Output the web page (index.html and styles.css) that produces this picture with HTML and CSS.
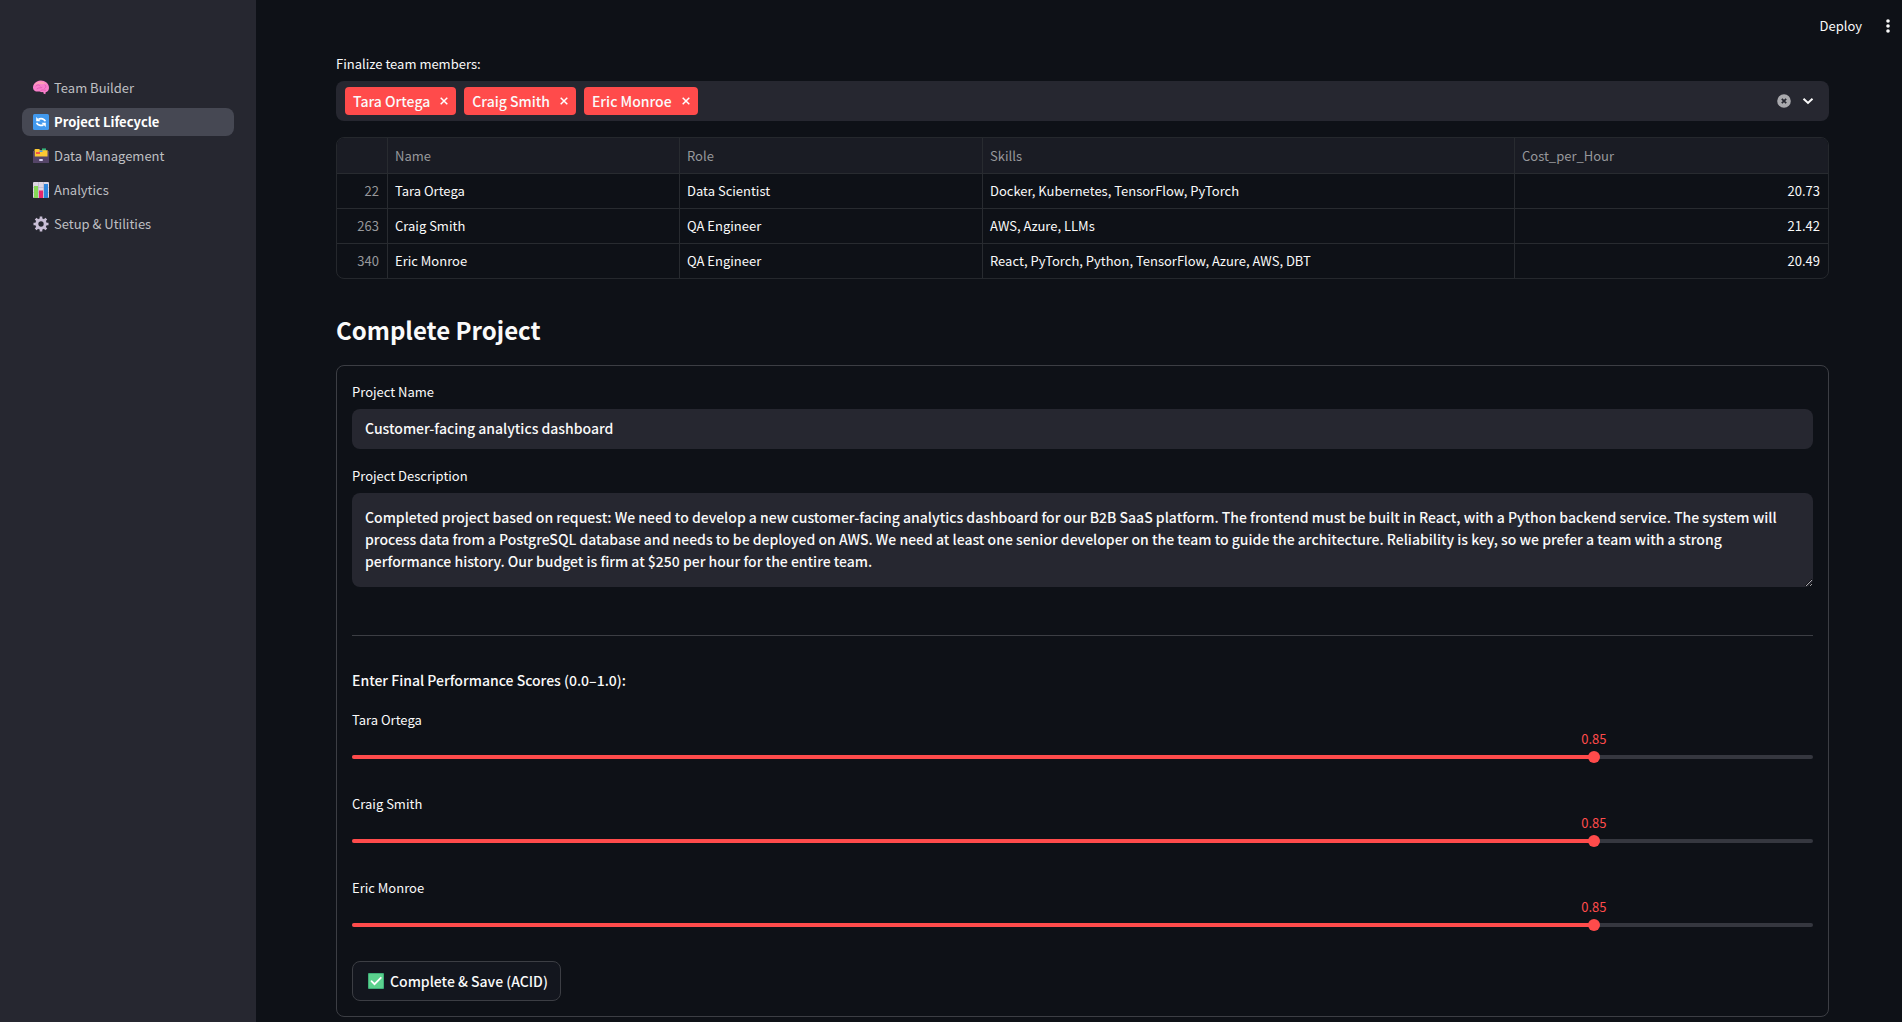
FILE: index.html
```html
<!DOCTYPE html>
<html lang="en">
<head>
<meta charset="utf-8">
<meta name="viewport" content="width=device-width, initial-scale=1">
<title>Project Lifecycle</title>
<link rel="stylesheet" href="styles.css">
</head>
<body>
<div class="app">
  <nav class="sidebar" aria-label="Pages">
    <a class="nav-link" href="#team">
      <svg class="emoji" viewBox="0 0 16 16" aria-hidden="true"><path d="M0 8C-.2 5 1.500 2.500 4 1.500C7-.2 11 .5 13.500 2.500C16 4.500 16.500 8 15.500 10C15 11.500 13.500 12 12.800 12L12.300 14.300L10.500 13.500L10.300 12C8 12.500 7 11.500 6 11.500C3 12 .5 11 0 8Z" fill="#f97fcb"/><path d="M1 6C2 3 4 2 6 1.800C9 1 12 2.500 13.500 4C11 3.500 9 4.500 7 4C5 3.500 3 4.500 1 6Z" fill="#fb9fb4"/><path d="M3 6C5 4 6.500 5 7 6M4 8.800C6 7 8 8.500 9 7.500M12 5C13.500 6 13 8 11.500 8.500M8 10.300C10 9.300 11 10.300 12.500 10.300" fill="none" stroke="#e055b0" stroke-width=".8" stroke-linecap="round"/></svg>
      <span>Team Builder</span>
    </a>
    <a class="nav-link active" href="#lifecycle" aria-current="page">
      <svg class="emoji" viewBox="0 0 16 16" aria-hidden="true"><rect width="16" height="16" rx="1.500" fill="#4199ee"/><path d="M12.300 7.300C11.500 4.800 8 3.800 5.500 5.300M3.700 8.700C4.500 11.200 8 12.200 10.500 10.700" fill="none" stroke="#fff" stroke-width="1.800"/><path d="M3.200 3V7.300H7.500ZM12.800 13V8.700H8.500Z" fill="#fff"/></svg>
      <span>Project Lifecycle</span>
    </a>
    <a class="nav-link" href="#data">
      <svg class="emoji" viewBox="0 0 16 16" aria-hidden="true"><path d="M9 .4H13V3H9Z" fill="#35b57a"/><path d="M1.500 2Q1.500 1 2.500 1H6L7.500 2.200H14Q15 2.200 15 3.200V9H1.500Z" fill="#fcc934"/><path d="M3 4H7V6H3Z" fill="#f0564a"/><path d="M6.500 2.500H9.500V4H6.500Z" fill="#4a9be8"/><path d="M0 3H1.500V8.500H14.500V3H16V14.500Q16 15 15.500 15H.5Q0 15 0 14.500Z" fill="#554568"/><rect x="6" y="11" width="4" height="2" rx="1" fill="#d8cfee"/></svg>
      <span>Data Management</span>
    </a>
    <a class="nav-link" href="#analytics">
      <svg class="emoji" viewBox="0 0 16 16" aria-hidden="true"><rect width="16" height="16" rx="1" fill="#ddd6e2"/><path d="M0 5.500H16M0 10.500H16M5.500 0V16M10.500 0V16" stroke="#b9b0c2" stroke-width=".6"/><path d="M1 4H5V16H1Z" fill="#86d957"/><path d="M6 8.500H10V16H6Z" fill="#e8286d"/><path d="M11 2H15V16H11Z" fill="#2f86dc"/></svg>
      <span>Analytics</span>
    </a>
    <a class="nav-link" href="#setup">
      <svg class="emoji" viewBox="0 0 16 16" aria-hidden="true"><circle cx="8" cy="8" r="4.200" fill="none" stroke="#c9bfd6" stroke-width="3"/><path d="M8 .5V3M8 13V15.500M.5 8H3M13 8H15.500M2.700 2.700L4.500 4.500M11.500 11.500L13.300 13.300M13.300 2.700L11.500 4.500M2.700 13.300L4.500 11.500" stroke="#c9bfd6" stroke-width="2.600"/></svg>
      <span>Setup &amp; Utilities</span>
    </a>
  </nav>

  <div class="page">
    <header class="toolbar">
      <button class="deploy" type="button">Deploy</button>
      <button class="icon-button" type="button" aria-label="Main menu">
        <svg width="16" height="16" viewBox="0 0 16 16" aria-hidden="true"><g fill="#fafafa"><circle cx="8" cy="3" r="1.800"/><circle cx="8" cy="8" r="1.800"/><circle cx="8" cy="13" r="1.800"/></g></svg>
      </button>
    </header>

    <main class="content">
      <section class="field">
        <label class="label" for="members">Finalize team members:</label>
        <div class="multiselect">
          <span class="chip">Tara Ortega <button class="chip-remove" type="button" aria-label="Remove Tara Ortega"><svg width="8" height="8" viewBox="0 0 8 8" aria-hidden="true"><path d="M.7.7L7.300 7.300M7.300.7L.7 7.300"/></svg></button></span>
          <span class="chip">Craig Smith <button class="chip-remove" type="button" aria-label="Remove Craig Smith"><svg width="8" height="8" viewBox="0 0 8 8" aria-hidden="true"><path d="M.7.7L7.300 7.300M7.300.7L.7 7.300"/></svg></button></span>
          <span class="chip">Eric Monroe <button class="chip-remove" type="button" aria-label="Remove Eric Monroe"><svg width="8" height="8" viewBox="0 0 8 8" aria-hidden="true"><path d="M.7.7L7.300 7.300M7.300.7L.7 7.300"/></svg></button></span>
          <input class="multiselect-input" id="members" type="text" role="combobox" aria-expanded="false" autocomplete="off">
          <button class="icon-button" type="button" aria-label="Clear all"><svg width="14" height="14" viewBox="0 0 14 14" aria-hidden="true"><circle cx="7" cy="7" r="6.800" fill="#a9a9ad"/><path d="M4.800 4.800L9.200 9.200M9.200 4.800L4.800 9.200" stroke="#262730" stroke-width="1.700"/></svg></button>
          <button class="icon-button" type="button" aria-label="Open"><svg width="14" height="14" viewBox="0 0 14 14" aria-hidden="true"><path d="M2.500 4.800L7 9L11.500 4.800" fill="none" stroke="#fafafa" stroke-width="2"/></svg></button>
        </div>
      </section>

      <div class="table-frame">
        <table class="members">
          <colgroup><col class="col-index"><col class="col-name"><col class="col-role"><col class="col-skills"><col></colgroup>
          <thead>
            <tr><th></th><th scope="col">Name</th><th scope="col">Role</th><th scope="col">Skills</th><th scope="col">Cost_per_Hour</th></tr>
          </thead>
          <tbody>
            <tr><th scope="row">22</th><td>Tara Ortega</td><td>Data Scientist</td><td>Docker, Kubernetes, TensorFlow, PyTorch</td><td class="number">20.73</td></tr>
            <tr><th scope="row">263</th><td>Craig Smith</td><td>QA Engineer</td><td>AWS, Azure, LLMs</td><td class="number">21.42</td></tr>
            <tr><th scope="row">340</th><td>Eric Monroe</td><td>QA Engineer</td><td>React, PyTorch, Python, TensorFlow, Azure, AWS, DBT</td><td class="number">20.49</td></tr>
          </tbody>
        </table>
      </div>

      <h2 class="title">Complete Project</h2>

      <form class="form">
        <div class="field">
          <label class="label" for="name">Project Name</label>
          <input class="text-input" id="name" type="text" value="Customer-facing analytics dashboard">
        </div>
        <div class="field">
          <label class="label" for="description">Project Description</label>
          <textarea class="text-area" id="description" rows="3">Completed project based on request: We need to develop a new customer-facing analytics dashboard for our B2B SaaS platform. The frontend must be built in React, with a Python backend service. The system will
process data from a PostgreSQL database and needs to be deployed on AWS. We need at least one senior developer on the team to guide the architecture. Reliability is key, so we prefer a team with a strong
performance history. Our budget is firm at $250 per hour for the entire team.</textarea>
        </div>
        <hr class="divider">
        <p class="prompt">Enter Final Performance Scores (0.0–1.0):</p>
        <div class="field">
          <label class="label" for="score-tara">Tara Ortega</label>
          <div class="slider">
            <output class="slider-value" for="score-tara" style="left: 85%">0.85</output>
            <span class="slider-track"><span class="slider-fill" style="width: 85%"></span></span>
            <input class="slider-input" id="score-tara" type="range" min="0" max="1" step="0.01" value="0.85">
          </div>
        </div>
        <div class="field">
          <label class="label" for="score-craig">Craig Smith</label>
          <div class="slider">
            <output class="slider-value" for="score-craig" style="left: 85%">0.85</output>
            <span class="slider-track"><span class="slider-fill" style="width: 85%"></span></span>
            <input class="slider-input" id="score-craig" type="range" min="0" max="1" step="0.01" value="0.85">
          </div>
        </div>
        <div class="field">
          <label class="label" for="score-eric">Eric Monroe</label>
          <div class="slider">
            <output class="slider-value" for="score-eric" style="left: 85%">0.85</output>
            <span class="slider-track"><span class="slider-fill" style="width: 85%"></span></span>
            <input class="slider-input" id="score-eric" type="range" min="0" max="1" step="0.01" value="0.85">
          </div>
        </div>
        <button class="submit" type="button">
          <svg class="emoji" viewBox="0 0 16 16" aria-hidden="true"><rect width="16" height="16" rx="1" fill="#3fae78"/><rect x="1" y="1" width="14" height="14" rx="1" fill="#5bd18d"/><path d="M3.500 8.200L6.500 11.200L12.800 4.800" fill="none" stroke="#fff" stroke-width="1.800" stroke-linecap="round"/></svg>
          <span>Complete &amp; Save (ACID)</span>
        </button>
      </form>
    </main>
  </div>
</div>
</body>
</html>
```
FILE: styles.css
```css
* {
  box-sizing: border-box;
}

body {
  margin: 0;
  background: #0e1117;
  color: #fafafa;
  font: 400 13px/20px "Noto Sans CJK SC", "Open Sans", sans-serif;
}

button,
input,
textarea {
  margin: 0;
  font: inherit;
  color: inherit;
}

.app {
  display: flex;
  min-height: 100vh;
}

.sidebar {
  display: flex;
  flex: 0 0 256px;
  flex-direction: column;
  gap: 6px;
  padding: 74px 22px 0;
  background: #262730;
}

.nav-link {
  display: flex;
  align-items: center;
  gap: 5px;
  height: 28px;
  padding: 0 11px;
  border-radius: 8px;
  color: #bebfc2;
  text-decoration: none;
}

.nav-link.active {
  background: #464853;
  color: #fff;
  font-weight: 700;
}

.emoji {
  flex: none;
  width: 16px;
  height: 16px;
}

.page {
  flex: 1;
  min-width: 0;
}

.toolbar {
  display: flex;
  align-items: center;
  justify-content: flex-end;
  gap: 18px;
  height: 53px;
  padding: 0 6px 2px 0;
}

.deploy,
.icon-button,
.chip-remove {
  display: flex;
  padding: 0;
  border: 0;
  background: none;
  cursor: pointer;
}

.content {
  padding: 0 73px 4px 80px;
}

.field {
  display: flex;
  flex-direction: column;
}

.label {
  height: 28px;
  line-height: 22px;
}

.multiselect {
  display: flex;
  align-items: center;
  gap: 8px;
  height: 40px;
  padding: 0 14px 0 9px;
  border-radius: 8px;
  background: #262730;
}

.multiselect .icon-button + .icon-button {
  margin-left: 2px;
}

.chip {
  display: flex;
  align-items: center;
  gap: 10px;
  height: 28px;
  padding: 0 8px;
  border-radius: 4px;
  background: #ff4b4b;
  font-size: 14px;
  font-weight: 500;
}

.chip-remove path {
  stroke: #fff;
  stroke-width: 1.5;
}

.multiselect-input {
  flex: 1;
  min-width: 0;
  border: 0;
  outline: 0;
  background: none;
}

.table-frame {
  margin-top: 16px;
  overflow: hidden;
  border: 1px solid #25282d;
  border-radius: 8px;
}

.members {
  width: 100%;
  border-spacing: 0;
  table-layout: fixed;
}

.col-index {
  width: 51px;
}

.col-name {
  width: 292px;
}

.col-role {
  width: 303px;
}

.col-skills {
  width: 532px;
}

.members th,
.members td {
  height: 35px;
  padding: 0 8px 0 7px;
  border: 0 solid #282b30;
  border-width: 0 1px 1px 0;
  font-weight: 400;
  text-align: left;
  white-space: nowrap;
}

.members th {
  color: #97989b;
}

.members thead th {
  height: 36px;
  background: #1a1c24;
}

.members tbody th,
.members .number {
  text-align: right;
}

.members tr > :last-child {
  border-right: 0;
}

.members tbody tr:last-child > * {
  height: 34px;
  border-bottom: 0;
}

.title {
  margin: 33px 0 17px;
  font-size: 24px;
  font-weight: 700;
  line-height: 36px;
}

.form {
  display: flex;
  flex-direction: column;
  gap: 16px;
  padding: 15px;
  border: 1px solid #3c3e44;
  border-radius: 8px;
}

.text-input {
  height: 40px;
  padding: 0 13px 2px;
  border: 0;
  border-radius: 8px;
  background: #262730;
  font-size: 14px;
  font-weight: 500;
}

.text-area {
  height: 94px;
  padding: 13px;
  border: 0;
  border-radius: 8px;
  background: #262730;
  font-size: 14px;
  font-weight: 500;
  line-height: 22px;
  resize: vertical;
}

.divider {
  width: 100%;
  height: 1px;
  margin: 32px 0 16px;
  border: 0;
  background: #3c3e44;
}

.prompt {
  margin: 0;
  font-size: 14px;
  font-weight: 500;
  line-height: 25px;
}

.slider {
  position: relative;
  display: grid;
  align-items: center;
  height: 40px;
}

.slider-track,
.slider-input {
  grid-area: 1 / 1;
}

.slider-track {
  height: 4px;
  overflow: hidden;
  border-radius: 2px;
  background: #35373f;
}

.slider-fill {
  display: block;
  height: 100%;
  background: #ff4b4b;
}

.slider-input {
  width: calc(100% + 12px);
  height: 12px;
  margin: 0 -6px;
  appearance: none;
  background: none;
}

.slider-input::-webkit-slider-thumb {
  width: 12px;
  height: 12px;
  appearance: none;
  border-radius: 50%;
  background: #ff4b4b;
}

.slider-value {
  position: absolute;
  top: -8px;
  transform: translateX(-50%);
  color: #ff4b4b;
}

.submit {
  display: flex;
  align-items: center;
  align-self: flex-start;
  gap: 6px;
  height: 40px;
  padding: 0 12px 0 15px;
  border: 1px solid #3c3e44;
  border-radius: 8px;
  background: #13161e;
  font-size: 14px;
  font-weight: 500;
}
```
